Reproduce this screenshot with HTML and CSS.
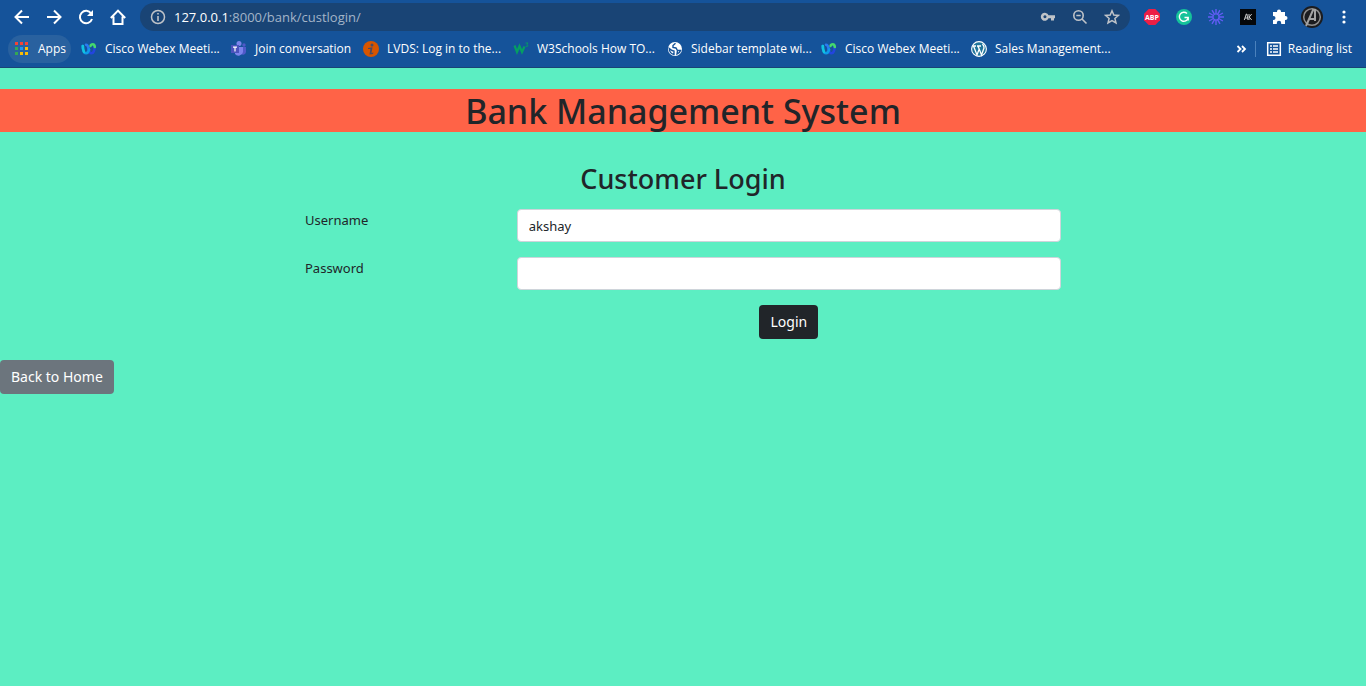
FILE: index.html
```html
<!DOCTYPE html>
<html lang="en">
<head>
<meta charset="utf-8">
<meta name="viewport" content="width=device-width, initial-scale=1">
<title>Bank Management System</title>
<link rel="stylesheet" href="styles.css">
</head>
<body>
<header class="browser">
  <div class="toolbar">
    <nav class="nav-buttons" aria-label="Navigation">
      <button class="icon-button" type="button" aria-label="Back"><svg class="icon-16" viewBox="0 0 16 16" fill="none" stroke="currentColor" stroke-width="2"><path d="M15 8H2M8 1.500L1.500 8L8 14.500"/></svg></button>
      <button class="icon-button" type="button" aria-label="Forward"><svg class="icon-16" viewBox="0 0 16 16" fill="none" stroke="currentColor" stroke-width="2"><path d="M1 8H14M8 1.500L14.500 8L8 14.500"/></svg></button>
      <button class="icon-button" type="button" aria-label="Reload"><svg class="icon-16" viewBox="0 0 16 16"><path d="M13.200 4.500A6.200 6.200 0 1 0 14 10" fill="none" stroke="currentColor" stroke-width="2"/><path d="M15 1V7H9Z" fill="currentColor"/></svg></button>
      <button class="icon-button" type="button" aria-label="Home"><svg class="icon-16" viewBox="0 0 16 16" fill="none" stroke="currentColor" stroke-width="2"><path d="M0.800 9L8 1.600L15.200 9M3.500 7.500V15H12.500V7.500"/></svg></button>
    </nav>
    <div class="omnibox">
      <svg class="icon-16 muted" viewBox="0 0 16 16"><circle cx="8" cy="8" r="6.500" fill="none" stroke="currentColor" stroke-width="1.500"/><path d="M7.200 7H8.800V12H7.200ZM7.200 4H8.800V5.600H7.200Z" fill="currentColor"/></svg>
      <div class="address"><span class="host">127.0.0.1</span>:8000/bank/custlogin/</div>
      <div class="omnibox-actions muted">
        <button class="icon-button" type="button" aria-label="Passwords"><svg class="icon-16" viewBox="0 0 16 16" fill="currentColor" fill-rule="evenodd"><path d="M8.500 6.300A4 4 0 1 0 8.500 9.300H11V11.500H14V9.300H15V6.300ZM5 6.300A1.500 1.500 0 1 1 4.900 6.300Z"/></svg></button>
        <button class="icon-button" type="button" aria-label="Zoom"><svg class="icon-16" viewBox="0 0 16 16" fill="none" stroke="currentColor" stroke-width="1.600"><circle cx="6.500" cy="6.500" r="4.700"/><path d="M10 10L14.500 14.500M4.300 6.500H8.700"/></svg></button>
        <button class="icon-button" type="button" aria-label="Bookmark this page"><svg class="icon-16" viewBox="0 0 16 16" fill="none" stroke="currentColor" stroke-width="1.500"><path d="M8 1.800L9.800 6L14.400 6.400L10.900 9.400L12 13.900L8 11.500L4 13.900L5.100 9.400L1.600 6.400L6.200 6Z"/></svg></button>
      </div>
    </div>
    <div class="extensions">
      <button class="icon-button" type="button" aria-label="Adblock Plus"><svg class="icon-16" viewBox="0 0 16 16"><path d="M4.700 0H11.300L16 4.700V11.300L11.300 16H4.700L0 11.300V4.700Z" fill="#ed1e45"/><text class="abp" x="8" y="10.500" text-anchor="middle">ABP</text></svg></button>
      <button class="icon-button" type="button" aria-label="Grammarly"><svg class="icon-16" viewBox="0 0 16 16"><circle cx="8" cy="8" r="8" fill="#15c39a"/><path d="M11 4.500A4.500 4.500 0 1 0 12.200 9M8.500 8.500H12.200V11.500" fill="none" stroke="#fff" stroke-width="1.400"/></svg></button>
      <button class="icon-button" type="button" aria-label="Loom"><svg class="icon-16" viewBox="0 0 16 16" fill="none" stroke="#625df5"><circle cx="8" cy="8" r="3" stroke-width="1.200"/><path stroke-width="1.400" d="M8 0V5M8 11V16M0 8H5M11 8H16M4 1.100L6.500 5.400M9.500 10.600L12 14.900M1.100 4L5.400 6.500M10.600 9.500L14.900 12M1.100 12L5.400 9.500M10.600 6.500L14.900 4M4 14.900L6.500 10.600M9.500 5.400L12 1.100"/></svg></button>
      <button class="icon-button" type="button" aria-label="AK"><svg class="icon-16" viewBox="0 0 16 16"><path d="M0 0H16V16H0Z" fill="#05070a"/><path d="M4.300 11L6.300 5H6.900L8 11M5 9H7.500M9 5V11M11.700 5L9.200 8L11.700 11" fill="none" stroke="#ddd" stroke-width=".9"/></svg></button>
      <button class="icon-button" type="button" aria-label="Extensions"><svg class="icon-16" viewBox="0 0 16 16"><path fill="currentColor" d="M1 3H5V2.500A2 2 0 0 1 9 2.500V3H13V7H13.500A2 2 0 0 1 13.500 11H13V15H9.200V14A2.200 2.200 0 0 0 4.800 14V15H1V11H1.500A2 2 0 0 0 1.500 7H1Z"/></svg></button>
      <button class="icon-button" type="button" aria-label="Profile"><svg class="avatar" viewBox="0 0 22 22"><circle cx="11" cy="11" r="11" fill="#1b1c1f"/><circle cx="11" cy="11" r="8.300" fill="none" stroke="#8e8e8e" stroke-width="1.500"/><path d="M5 20L12.500 3M14 3V15M8.500 13H15" fill="none" stroke="#a3a3a3" stroke-width="2"/></svg></button>
      <button class="icon-button" type="button" aria-label="Menu"><svg class="icon-16" viewBox="0 0 16 16" fill="currentColor"><circle cx="8" cy="3" r="1.600"/><circle cx="8" cy="8" r="1.600"/><circle cx="8" cy="13" r="1.600"/></svg></button>
    </div>
  </div>
  <nav class="bookmarks" aria-label="Bookmarks">
    <a class="bookmark apps" href="#"><svg class="icon-16" viewBox="0 0 16 16"><path fill="#f44336" d="M1 1H4V4H1ZM6 1H9V4H6ZM11 1H14V4H11Z"/><path fill="#34a853" d="M1 6H4V9H1ZM1 11H4V14H1Z"/><path fill="#2196f3" d="M6 6H9V9H6Z"/><path fill="#fbbc05" d="M11 6H14V9H11ZM6 11H9V14H6ZM11 11H14V14H11Z"/></svg><span>Apps</span></a>
    <a class="bookmark wide" href="#"><svg class="icon-16" viewBox="0 0 16 16" fill="none" stroke-width="2.600" stroke-linecap="round"><path d="M13.500 5C13.800 9 12.500 12.300 10.500 12.300C8.500 12.300 7.500 9 7 6" stroke="#2345de"/><path d="M9.500 5C10 3 13.500 2 13.800 6" stroke="#45d96c"/><path d="M5 3.800C7 3.800 7.500 7 8 9" stroke="#2a7cf0"/><path d="M1.800 5C1.800 9 3 12.300 5 12.300C6.500 12.300 7.500 11 8 8.500" stroke="#0f9be8"/><path d="M1.800 5C1.800 7.500 2.300 9.500 3 11" stroke="#11c4df"/></svg><span>Cisco Webex Meeti...</span></a>
    <a class="bookmark medium" href="#"><svg class="icon-16" viewBox="0 0 16 16"><circle cx="8" cy="2.500" r="2.500" fill="#7b83eb"/><circle cx="13" cy="4" r="1.700" fill="#5059c9"/><path d="M10 6H15V11A3 3 0 0 1 10 13Z" fill="#5059c9"/><path d="M4 6H12V11A4.500 4.500 0 0 1 4 13Z" fill="#7b83eb"/><path d="M0 4H8V12H0Z" fill="#4b53bc"/><path d="M2 6.200H6M4 6.200V10.500" stroke="#fff" stroke-width="1.200"/></svg><span>Join conversation</span></a>
    <a class="bookmark wide" href="#"><svg class="icon-16" viewBox="0 0 16 16"><circle cx="8" cy="8" r="8" fill="#d75500"/><circle cx="9" cy="4" r="1.500" fill="#4b4b62"/><path d="M5 7L9.500 6.300L8.500 12L10.500 11.500L10 13L6.500 13.500L7.400 8H5Z" fill="#4b4b62"/></svg><span>LVDS: Log in to the...</span></a>
    <a class="bookmark wider" href="#"><svg class="icon-16" viewBox="0 0 16 16" fill="none" stroke="#059f62"><path d="M1.500 4.500L4 11L6.500 5L9 11L11.500 5.500" stroke-width="2.200"/><path d="M12.500 2H15L13.800 3.400Q15.500 4 14.500 5.300L12.500 5.300" stroke-width=".9"/></svg><span>W3Schools How TO...</span></a>
    <a class="bookmark wider" href="#"><svg class="icon-16" viewBox="0 0 16 16"><circle cx="8" cy="8" r="7" fill="#fff"/><path d="M2.300 7.500L5 9.500L7 10V13.500C4.500 13 2.500 11 2.300 7.500ZM8.500 2.300L6 4.500V6.500L9 7L10.500 9.500L13.500 9.500C13 11.500 11.500 12.500 10 13L10.500 9.500" fill="none" stroke="#15539a" stroke-width="1.400"/></svg><span>Sidebar template wi...</span></a>
    <a class="bookmark wide" href="#"><svg class="icon-16" viewBox="0 0 16 16" fill="none" stroke-width="2.600" stroke-linecap="round"><path d="M13.500 5C13.800 9 12.500 12.300 10.500 12.300C8.500 12.300 7.500 9 7 6" stroke="#2345de"/><path d="M9.500 5C10 3 13.500 2 13.800 6" stroke="#45d96c"/><path d="M5 3.800C7 3.800 7.500 7 8 9" stroke="#2a7cf0"/><path d="M1.800 5C1.800 9 3 12.300 5 12.300C6.500 12.300 7.500 11 8 8.500" stroke="#0f9be8"/><path d="M1.800 5C1.800 7.500 2.300 9.500 3 11" stroke="#11c4df"/></svg><span>Cisco Webex Meeti...</span></a>
    <a class="bookmark wide" href="#"><svg class="icon-16" viewBox="0 0 16 16"><circle cx="8" cy="8" r="7.400" fill="#21759b" stroke="#fff" stroke-width="1.100"/><path d="M2.500 5L6 14L8.200 8L6.500 4.500M7 5L10.500 14L13 7Q13.200 5 11.500 3M2 5H5M6 5H10" fill="none" stroke="#fff" stroke-width="1.300"/></svg><span>Sales Management...</span></a>
    <div class="bookmarks-end">
      <button class="icon-button" type="button" aria-label="More bookmarks"><svg class="icon-16" viewBox="0 0 16 16" fill="none" stroke="currentColor" stroke-width="1.800"><path d="M4.500 5L7.500 8L4.500 11M9 5L12 8L9 11"/></svg></button>
      <span class="divider"></span>
      <a class="bookmark reading" href="#"><svg class="icon-16" viewBox="0 0 16 16" fill="none" stroke="currentColor" stroke-width="1.500"><path d="M1.700 1.700H14.300V14.300H1.700ZM4 5H6M7 5H12M4 8H6M7 8H12M4 11H6M7 11H12"/></svg><span>Reading list</span></a>
    </div>
  </nav>
</header>
<main class="page">
  <h1 class="banner">Bank Management System</h1>
  <form class="login">
    <h2 class="login-title">Customer Login</h2>
    <div class="field"><label for="username">Username</label><input class="control" id="username" type="text" value="akshay"></div>
    <div class="field"><label for="password">Password</label><input class="control" id="password" type="password"></div>
    <div class="field"><button class="button dark submit" type="button">Login</button></div>
  </form>
  <a class="button gray" href="#">Back to Home</a>
</main>
</body>
</html>
```
FILE: styles.css
```css
* { box-sizing: border-box; }
body {
  margin: 0;
  min-height: 100vh;
  background: #5ceec2;
  color: #212529;
  font: 13px/22px "Noto Sans", "Open Sans", sans-serif;
}
svg { display: block; flex: none; }
a { color: inherit; text-decoration: none; }
.icon-16 { width: 16px; height: 16px; }
.icon-button {
  display: flex;
  align-items: center;
  justify-content: center;
  width: 16px;
  height: 22px;
  padding: 0;
  border: 0;
  background: none;
  color: inherit;
}
.browser {
  background: #15539a;
  color: #fff;
  border-bottom: 1px solid #194475;
  font-size: 12px;
  line-height: 16px;
}
.toolbar {
  display: flex;
  align-items: center;
  height: 34px;
  padding: 0 14px;
  gap: 14px;
}
.nav-buttons, .omnibox-actions, .extensions { display: flex; align-items: center; gap: 16px; }
.omnibox {
  display: flex;
  flex: 1;
  align-items: center;
  height: 28px;
  padding: 0 10px;
  gap: 8px;
  border-radius: 14px;
  background: #194475;
}
.muted { color: #bfc3c8; }
.address { flex: 1; color: #a3b4c8; font: 13px/20px "Open Sans", sans-serif; }
.host { color: #fff; }
.abp { fill: #fff; font: bold 7px "Open Sans", sans-serif; }
.avatar { width: 22px; height: 22px; }
.bookmarks {
  display: flex;
  align-items: center;
  height: 33px;
  padding: 0 14px 4px 8px;
  font-family: "Open Sans", sans-serif;
  gap: 16px;
  white-space: nowrap;
}
.bookmark { display: flex; align-items: center; gap: 8px; }
.medium { width: 116px; }
.wide { width: 134px; }
.wider { width: 138px; }
.apps {
  width: 63px;
  height: 28px;
  padding: 0 6px;
  margin-right: -6px;
  border-radius: 14px;
  background: #29619f;
}
.bookmarks-end { display: flex; align-items: center; gap: 6px; margin-left: auto; }
.divider { width: 1px; height: 16px; margin-right: 4px; background: #4b81bc; }
.reading { gap: 6px; }
.page { padding-top: 21px; }
.banner {
  margin: 0;
  padding-top: 2px;
  background: #ff6347;
  font-size: 34px;
  font-weight: 500;
  line-height: 41px;
  text-align: center;
}
.login { max-width: 756px; margin: 30px auto 21px; }
.login-title {
  margin: 0 0 13px;
  font-size: 27px;
  font-weight: 500;
  line-height: 34px;
  text-align: center;
}
.field {
  display: grid;
  grid-template-columns: 7fr 18fr;
  margin-bottom: 15px;
}
.field:last-child { margin-bottom: 0; }
.control {
  width: 100%;
  height: 33px;
  padding: 5px 11px;
  border: 1px solid #ced4da;
  border-radius: 4px;
  background: #fff;
  color: inherit;
  font: inherit;
}
.button {
  display: inline-block;
  padding: 6px 11px;
  border: 0;
  border-radius: 4px;
  color: #fff;
  font: 14px/22px "Noto Sans", "Open Sans", sans-serif;
}
.dark { background: #212529; }
.gray { background: #6c757d; }
.submit { grid-column: 2; justify-self: center; }
```
